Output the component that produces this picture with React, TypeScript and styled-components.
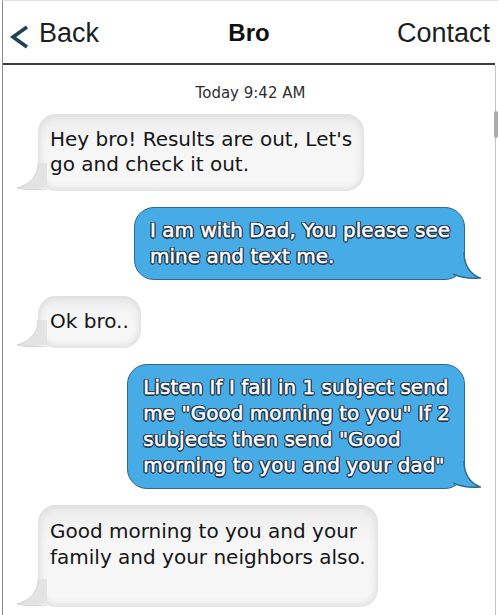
import React from "react";
import styled, { createGlobalStyle } from "styled-components";

const Global = createGlobalStyle`
  html, body { margin: 0; padding: 0; background: #ffffff; }
  #root { width: 499px; height: 615px; overflow: hidden; }
`;

const Screen = styled.div`
  margin-left: 2px;
  width: 496px;
  height: 615px;
  border-left: 1px solid #8c8c8c;
  border-top: 1px solid #e2e2e2;
  box-sizing: border-box;
  background: #ffffff;
  display: flex;
  flex-direction: column;
  overflow: hidden;
`;

const Header = styled.header`
  height: 64px;
  flex: none;
  margin-right: 3px;
  border-bottom: 2px solid #3c3c3c;
  display: grid;
  grid-template-columns: 1fr auto 1fr;
  align-items: center;
  font-family: "Liberation Sans", Arial, sans-serif;
  color: #1e1e1e;
  padding-top: 2px;
  box-sizing: border-box;
`;

const BackButton = styled.div`
  display: flex;
  align-items: center;
  gap: 9px;
  padding-left: 6px;
  font-size: 27px;
`;

const Chevron = styled.svg`
  margin-top: 8px;
  flex: none;
`;

const Title = styled.div`
  font-size: 24px;
  font-weight: 700;
  color: #111;
`;

const ContactLink = styled.div`
  justify-self: end;
  padding-right: 5px;
  font-size: 27px;
`;

const Body = styled.div`
  flex: 1;
  display: flex;
  min-height: 0;
`;

const Messages = styled.div`
  flex: 1;
  display: flex;
  flex-direction: column;
  padding: 19px 28px 0 35px;
  font-family: "DejaVu Sans", Verdana, sans-serif;
  font-size: 20px;
  line-height: 25px;
`;

const TimeStamp = styled.div`
  align-self: center;
  margin-left: -2px;
  font-size: 15px;
  line-height: 18px;
  color: #2e2e2e;
  margin-bottom: 12px;
`;

const Bubble = styled.div<{ $mine?: boolean; $tall?: boolean }>`
  position: relative;
  align-self: ${(p) => (p.$mine ? "flex-end" : "flex-start")};
  white-space: nowrap;
  margin-bottom: 16px;
  ${(p) =>
    p.$mine
      ? `
    background: #47ace6;
    border: 1.5px solid #2d6a8c;
    border-radius: 20px;
    padding: 9px 14px 10px 15px;
    line-height: 26px;
    color: #ffffff;
    -webkit-text-stroke: 0.5px #ffffff;
    text-shadow:
      -1.2px -1.2px 0 #24384c, 1.2px -1.2px 0 #24384c, -1.2px 1.2px 0 #24384c,
      1.2px 1.2px 0 #24384c, 0 1.5px 0 #24384c, 0 -1.5px 0 #24384c,
      1.5px 0 0 #24384c, -1.5px 0 0 #24384c;
  `
      : `
    background: linear-gradient(to bottom, #ececec 0%, #f6f6f6 35%, #f7f7f7 100%);
    box-shadow: inset 0 0 7px 2px #dcdcdc;
    border-radius: 18px;
    color: #151515;
    padding: ${p.$tall ? "13px 12px 37px 12px" : "13px 12px 14px 12px"};
    line-height: ${p.$tall ? "26px" : "25px"};
  `}
`;

const TailLeft = styled.svg`
  position: absolute;
  left: -21px;
  bottom: 0;
`;

const TailRight = styled.svg`
  position: absolute;
  right: -17px;
  bottom: -1px;
`;

const ScrollTrack = styled.div`
  width: 5px;
  flex: none;
  display: flex;
  flex-direction: column;
  align-items: center;
  background: linear-gradient(to right, transparent 2px, #c4c4c4 2px, #c4c4c4 3px, transparent 3px);
`;

const ScrollThumb = styled.div`
  margin-top: 46px;
  width: 4px;
  height: 27px;
  border-radius: 2px;
  background: #ababab;
`;

const GrayTail = () => (
  <TailLeft width="30" height="28" viewBox="0 0 30 28">
    <path d="M21 0 C21 12 14 21 0 25 C9 27 19 27 30 24 L30 0 Z" fill="#e3e3e3" />
    <path d="M21 0 C21 12 14 21 0 25 C9 27 19 27 30 26" fill="none" stroke="#d4d4d4" strokeWidth="1" />
  </TailLeft>
);

const BlueTail = () => (
  <TailRight width="28" height="28" viewBox="0 0 28 28">
    <path d="M0 0 L11 0 C11 12 15 21 27 26 C18 27 9 26 0 22 Z" fill="#47ace6" />
    <path d="M11 0 C11 12 15 21 27 26 C18 27 9 26 0 22" fill="none" stroke="#2d6a8c" strokeWidth="1.5" />
  </TailRight>
);

export default function App() {
  return (
    <>
      <Global />
      <Screen>
        <Header>
          <BackButton>
            <Chevron width="21" height="24" viewBox="0 0 21 24">
              <polyline points="18,2 4,12 18,22" fill="none" stroke="#1d4450" strokeWidth="3.6" strokeLinejoin="miter" />
            </Chevron>
            <span>Back</span>
          </BackButton>
          <Title>Bro</Title>
          <ContactLink>Contact</ContactLink>
        </Header>
        <Body>
          <Messages>
            <TimeStamp>Today 9:42 AM</TimeStamp>
            <Bubble>
              Hey bro! Results are out, Let's
              <br />
              go and check it out.
              <GrayTail />
            </Bubble>
            <Bubble $mine>
              I am with Dad, You please see
              <br />
              mine and text me.
              <BlueTail />
            </Bubble>
            <Bubble>
              Ok bro..
              <GrayTail />
            </Bubble>
            <Bubble $mine>
              Listen If I fail in 1 subject send
              <br />
              me "Good morning to you" If 2
              <br />
              subjects then send "Good
              <br />
              morning to you and your dad"
              <BlueTail />
            </Bubble>
            <Bubble $tall>
              Good morning to you and your
              <br />
              family and your neighbors also.
              <GrayTail />
            </Bubble>
          </Messages>
          <ScrollTrack>
            <ScrollThumb />
          </ScrollTrack>
        </Body>
      </Screen>
    </>
  );
}
